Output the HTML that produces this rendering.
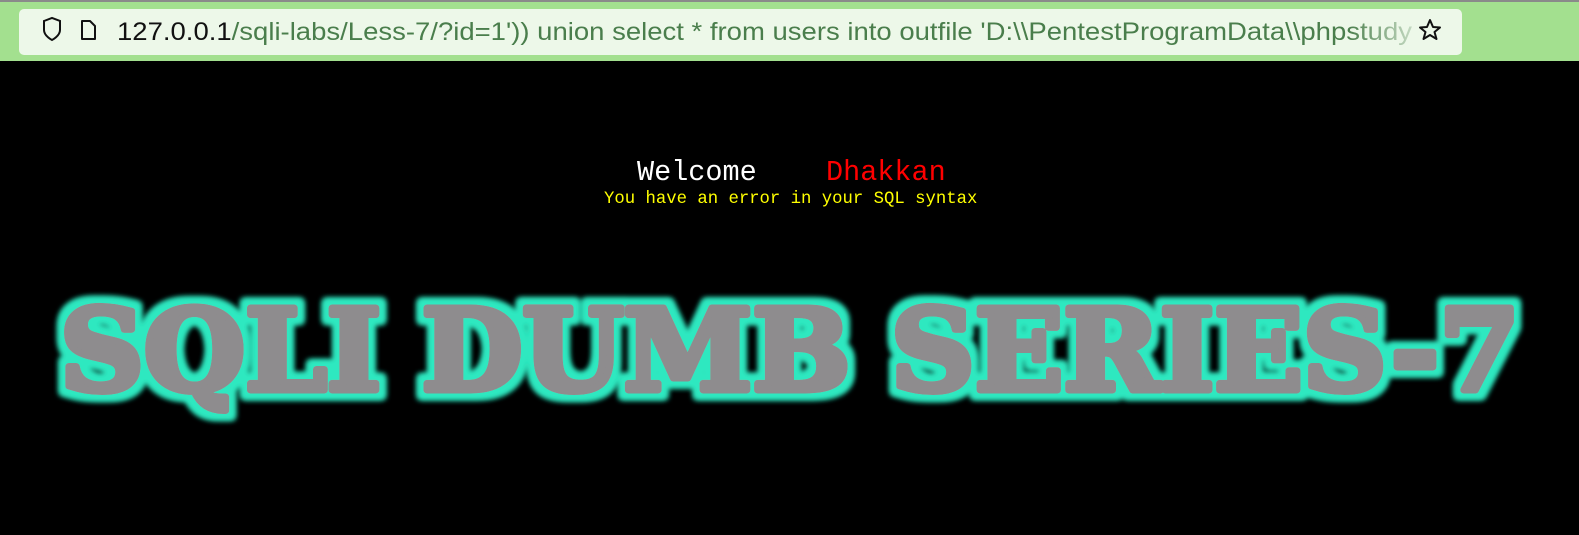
<!DOCTYPE html>
<html><head><meta charset="utf-8"><style>
html,body{margin:0;padding:0;width:1579px;height:535px;overflow:hidden;background:#000}
.top{position:absolute;left:0;top:0;width:1579px;height:61px;background:#a3e08f;border-top:2px solid #8a8a8a;box-sizing:border-box}
.box{position:absolute;left:19px;top:7px;width:1443px;height:46px;background:#edf8e9;border-radius:5px}
.t{position:absolute;font-family:"Liberation Mono",monospace;white-space:pre}
</style></head><body>
<div class="top"><div class="box"></div></div>
<svg width="1579" height="61" style="position:absolute;left:0;top:0">
<defs><linearGradient id="fd" x1="0" x2="1"><stop offset="0.95" stop-color="#4a7e4c"/><stop offset="1" stop-color="#4a7e4c" stop-opacity="0.25"/></linearGradient></defs>
<path d="M44 21 L52 18 L60 21 V30 C60 36 52 40 52 40 C52 40 44 36 44 30 Z" fill="none" stroke="#111" stroke-width="2"/>
<path d="M82 21 H90 L95 26 V39 H82 Z" fill="none" stroke="#111" stroke-width="2" stroke-linejoin="round"/>
<text x="117" y="40" font-family="Liberation Sans,sans-serif" font-size="25" textLength="1295" lengthAdjust="spacingAndGlyphs"><tspan fill="#111">127.0.0.1</tspan><tspan fill="url(#fd)">/sqli-labs/Less-7/?id=1')) union select * from users into outfile 'D:\\PentestProgramData\\phpstudy</tspan></text>
<path d="M1430 20 L1433 27 L1440 27.5 L1434.5 32 L1436.5 39 L1430 35 L1423.5 39 L1425.5 32 L1420 27.5 L1427 27 Z" fill="none" stroke="#111" stroke-width="2" stroke-linejoin="round"/>
</svg>
<div class="t" style="left:637px;top:156px;font-size:28.5px;color:#fff">Welcome</div>
<div class="t" style="left:826px;top:156px;font-size:28.5px;color:#f00">Dhakkan</div>
<div class="t" style="left:604px;top:190px;font-size:17.3px;color:#ff0">You have an error in your SQL syntax</div>
<svg width="1579" height="535" style="position:absolute;left:0;top:0">
<defs>
<filter id="g" x="-5%" y="-30%" width="110%" height="160%">
<feMorphology in="SourceAlpha" operator="dilate" radius="6" result="d"/>
<feGaussianBlur in="d" stdDeviation="3" result="b"/>
<feFlood flood-color="#2fe8c0"/><feComposite in2="b" operator="in" result="glow"/>
<feMerge><feMergeNode in="glow"/><feMergeNode in="glow"/><feMergeNode in="SourceGraphic"/></feMerge>
</filter>
</defs>
<g filter="url(#g)">
<text x="60" y="390" font-family="DejaVu Serif,Liberation Serif,serif" font-weight="bold" font-size="112" textLength="1460" lengthAdjust="spacingAndGlyphs" fill="#8e8c8e" stroke="#8e8c8e" stroke-width="7" stroke-linejoin="round">SQLI DUMB SERIES-7</text>
</g>
</svg>
</body></html>
